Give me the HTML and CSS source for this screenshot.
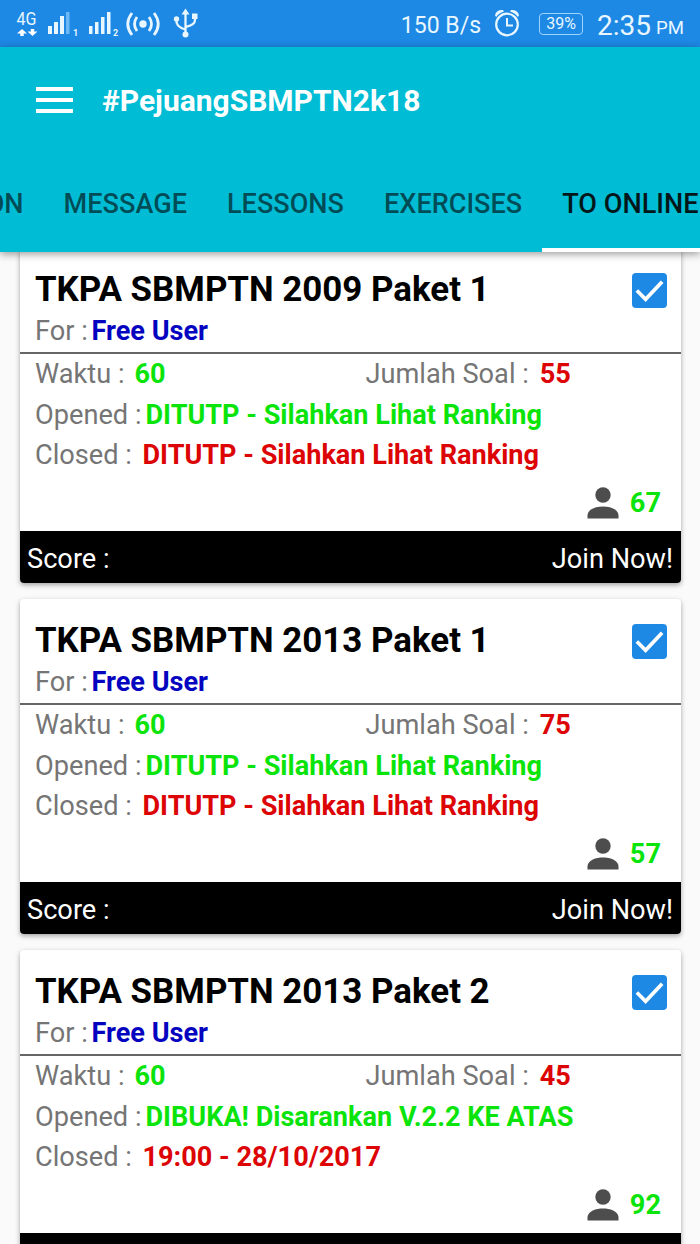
FILE: index.html
```
<!DOCTYPE html>
<html lang="id">

<head>
  <meta charset="UTF-8" />
  <title>#PejuangSBMPTN2k18</title>
  <meta name="viewport" content="width=device-width, initial-scale=1.0" />
  <link rel="stylesheet" href="styles.css">
</head>

<body>

  <div class="status-bar">
    <svg class="status-icons" width="200" height="47" viewBox="0 0 200 47">
      <g class="net-label">
        <text x="16.500" y="24.500" font-size="18" textLength="20" lengthAdjust="spacingAndGlyphs">4G</text>
        <text x="73" y="36" font-size="9" font-weight="700">1</text>
        <text x="113" y="36" font-size="9" font-weight="700">2</text>
      </g>
      <!-- data arrows -->
      <path d="M22 29l5 4.500h-3.300V36h-3.400v-2.500H17z" fill="#fff" transform="rotate(0)" class="up" />
      <path d="M32.500 36l-5-4.500h3.300V29h3.400v2.500h3.300z" fill="#fff" />
      <!-- signal bars -->
      <path d="M48 26h4v8h-4zM54 22h4v12h-4zM60 16h4v18h-4zM89 26h3.500v8H89zM95 22h3.500v12H95zM101 17h3.500v17H101zM107 12h3.500v22H107z" fill="#e8f7ff" />
      <path d="M66 12h3.500v22H66z" fill="#6cb8f3" />
      <!-- hotspot -->
      <circle cx="143" cy="24" r="3.700" fill="#e8f7ff" />
      <path d="M137 17q-5 7 0 14M149 17q5 7 0 14M132 13q-8.500 11 0 22M154 13q8.500 11 0 22" fill="none" stroke="#e8f7ff" stroke-width="2.800" />
      <!-- usb -->
      <path d="M185.500 13v21M176.500 20q-1 7 9 9.500M195 17v3q0 5-9.500 7" fill="none" stroke="#e8f7ff" stroke-width="2.300" />
      <path d="M185.500 8.500l4 6h-8zM192 13.500h5.500V19H192z" fill="#e8f7ff" />
      <circle cx="176.500" cy="19" r="2.700" fill="#e8f7ff" />
      <circle cx="185.500" cy="34.500" r="3" fill="#e8f7ff" />
    </svg>
    <div class="status-right">
      <span class="speed">150 B/s</span>
      <svg class="alarm" width="28" height="30" viewBox="0 0 28 30">
        <circle cx="14" cy="16.500" r="10.800" fill="none" stroke="#e8f7ff" stroke-width="2.200" />
        <path d="M14 10v7.500h6" fill="none" stroke="#e8f7ff" stroke-width="2" />
        <path d="M2 7.500q1-6 8-5.500l1 1.500Q5.500 5 3.200 9zM26 7.500q-1-6-8-5.500l-1 1.500q5.500 1.500 7.800 5.500z" fill="#e8f7ff" />
      </svg>
      <span class="battery">39%</span>
      <span class="clock">2:35</span>
      <span class="ampm">PM</span>
    </div>
  </div>

  <header class="app-bar">
    <div class="toolbar">
      <div class="menu-btn"><i></i><i></i><i></i></div>
      <h1>#PejuangSBMPTN2k18</h1>
    </div>
    <nav class="tabs">
      <a class="tab">ON</a>
      <a class="tab">MESSAGE</a>
      <a class="tab">LESSONS</a>
      <a class="tab">EXERCISES</a>
      <a class="tab active">TO ONLINE</a>
    </nav>
  </header>

  <main class="list">
    <div class="card">
      <div class="card-head">
        <h2>TKPA SBMPTN 2009 Paket 1</h2>
        <svg class="check" viewBox="0 0 36 36"><path d="M5 18l9 9L31 9" /></svg>
        <div class="row"><span class="label for">For :</span><b class="blue">Free User</b></div>
      </div>
      <div class="card-body">
        <div class="row">
          <span class="label time">Waktu :</span><b class="green">60</b>
          <span class="total"><span class="label">Jumlah Soal :</span><b class="red">55</b></span>
        </div>
        <div class="row"><span class="label opened">Opened :</span><b class="green">DITUTP - Silahkan Lihat Ranking</b></div>
        <div class="row"><span class="label closed">Closed :</span><b class="red">DITUTP - Silahkan Lihat Ranking</b></div>
        <div class="users">
          <svg class="person" viewBox="0 0 32 32"><circle cx="16" cy="8" r="7.700" /><path d="M0.500 31.500v-3.500C1 22 9 19.500 16 19.500S31 22 31.500 28v3.500z" /></svg>
          <b class="green">67</b>
        </div>
      </div>
      <div class="card-foot"><span>Score :</span><span>Join Now!</span></div>
    </div>

    <div class="card">
      <div class="card-head">
        <h2>TKPA SBMPTN 2013 Paket 1</h2>
        <svg class="check" viewBox="0 0 36 36"><path d="M5 18l9 9L31 9" /></svg>
        <div class="row"><span class="label for">For :</span><b class="blue">Free User</b></div>
      </div>
      <div class="card-body">
        <div class="row">
          <span class="label time">Waktu :</span><b class="green">60</b>
          <span class="total"><span class="label">Jumlah Soal :</span><b class="red">75</b></span>
        </div>
        <div class="row"><span class="label opened">Opened :</span><b class="green">DITUTP - Silahkan Lihat Ranking</b></div>
        <div class="row"><span class="label closed">Closed :</span><b class="red">DITUTP - Silahkan Lihat Ranking</b></div>
        <div class="users">
          <svg class="person" viewBox="0 0 32 32"><circle cx="16" cy="8" r="7.700" /><path d="M0.500 31.500v-3.500C1 22 9 19.500 16 19.500S31 22 31.500 28v3.500z" /></svg>
          <b class="green">57</b>
        </div>
      </div>
      <div class="card-foot"><span>Score :</span><span>Join Now!</span></div>
    </div>

    <div class="card">
      <div class="card-head">
        <h2>TKPA SBMPTN 2013 Paket 2</h2>
        <svg class="check" viewBox="0 0 36 36"><path d="M5 18l9 9L31 9" /></svg>
        <div class="row"><span class="label for">For :</span><b class="blue">Free User</b></div>
      </div>
      <div class="card-body">
        <div class="row">
          <span class="label time">Waktu :</span><b class="green">60</b>
          <span class="total"><span class="label">Jumlah Soal :</span><b class="red">45</b></span>
        </div>
        <div class="row"><span class="label opened">Opened :</span><b class="green">DIBUKA! Disarankan V.2.2 KE ATAS</b></div>
        <div class="row"><span class="label closed">Closed :</span><b class="red">19:00 - 28/10/2017</b></div>
        <div class="users">
          <svg class="person" viewBox="0 0 32 32"><circle cx="16" cy="8" r="7.700" /><path d="M0.500 31.500v-3.500C1 22 9 19.500 16 19.500S31 22 31.500 28v3.500z" /></svg>
          <b class="green">92</b>
        </div>
      </div>
      <div class="card-foot"></div>
    </div>
  </main>

</body>

</html>
```
FILE: styles.css
```
* {
  box-sizing: border-box;
}

body {
  margin: 0;
  height: 1244px;
  overflow: hidden;
  display: flex;
  flex-direction: column;
  font-family: Roboto, sans-serif;
  font-size: 27.2px;
  background-color: #fafafa;
}

/* status bar */
.status-bar {
  flex: none;
  height: 47px;
  display: flex;
  justify-content: space-between;
  background-color: #1e88e5;
  color: #e8f7ff;
}

.net-label {
  fill: #e8f7ff;
}

.status-right {
  display: flex;
  align-items: center;
  padding: 3px 16px 0 0;
  white-space: nowrap;
}

.speed {
  font-size: 23px;
  margin-right: 12px;
}

.alarm {
  margin: -4px 18px 0 0;
}

.battery {
  width: 44px;
  height: 22px;
  margin: -3px 14px 0 0;
  border: 1.5px solid #9fd4fa;
  border-radius: 4px;
  font-size: 16px;
  line-height: 20px;
  text-align: center;
}

.clock {
  font-size: 28px;
  margin-right: 5px;
}

.ampm {
  font-size: 18.6px;
  padding-top: 5px;
}

/* toolbar and tabs */
.app-bar {
  flex: none;
  position: relative;
  height: 205px;
  background-color: #00bcd4;
  box-shadow: 0 2px 8px rgba(0, 0, 0, 0.4);
}

.toolbar {
  height: 107px;
  display: flex;
  align-items: center;
  padding-left: 36px;
}

.menu-btn {
  width: 37px;
  display: grid;
  gap: 7px;
  margin: -1px 29px 0 0;
}

.menu-btn i {
  height: 4px;
  background-color: #fff;
}

h1 {
  margin: 0;
  font-size: 30px;
  font-weight: 700;
  color: #fff;
}

.tabs {
  height: 98px;
  display: flex;
  justify-content: flex-end;
  white-space: nowrap;
}

.tab {
  flex: none;
  padding: 0 20px;
  line-height: 101px;
  font-size: 27.1px;
  font-weight: 500;
  color: rgba(0, 0, 0, 0.6);
}

.tab.active {
  height: 98px;
  color: #03171a;
  margin-right: -18.5px;
  border-bottom: 4px solid #fff;
}

/* cards */
.list {
  flex: none;
  display: grid;
  gap: 16px;
  margin-top: -4px;
  padding: 0 19.5px;
}

.card {
  height: 335px;
  display: flex;
  flex-direction: column;
  border-radius: 4px;
  overflow: hidden;
  background-color: #fff;
  box-shadow: 0 2px 5px rgba(0, 0, 0, 0.35);
}

.card-head {
  height: 106px;
  display: grid;
  grid-template-columns: 1fr 35px;
  grid-template-rows: 63px 41px;
  padding: 0 13.5px 0 15.5px;
  border-bottom: 2px solid #666;
}

h2 {
  margin: 0;
  padding-top: 21px;
  font-size: 34.9px;
  line-height: 42px;
  font-weight: 700;
  color: #000;
}

.check {
  width: 35px;
  height: 35px;
  margin-top: 25px;
  border-radius: 4px;
  background-color: #1e88e5;
}

.check path {
  fill: none;
  stroke: #fff;
  stroke-width: 3.8;
}

.card-body {
  height: 177px;
  padding: 0 19.5px 0 15.5px;
}

.row {
  height: 40.7px;
  display: flex;
  line-height: 41px;
  white-space: nowrap;
}

.row b {
  font-size: 27.1px;
}

.label {
  color: #757575;
}

.for {
  width: 56.5px;
}

.time {
  width: 99.5px;
}

.opened {
  width: 110.5px;
}

.closed {
  width: 107.5px;
}

.total {
  display: flex;
  gap: 11px;
  margin-left: auto;
  width: 295.5px;
}

.users {
  height: 54px;
  display: flex;
  justify-content: flex-end;
  align-items: center;
  gap: 11px;
}

.person {
  width: 32px;
  height: 32px;
  fill: #4d4d4d;
}

.green {
  color: #0be40b;
}

.red {
  color: #dc0404;
}

.blue {
  color: #0404c0;
}

.card-foot {
  height: 52px;
  display: flex;
  justify-content: space-between;
  padding: 0 7.5px;
  line-height: 56px;
  background-color: #000;
  color: #fff;
}
```
